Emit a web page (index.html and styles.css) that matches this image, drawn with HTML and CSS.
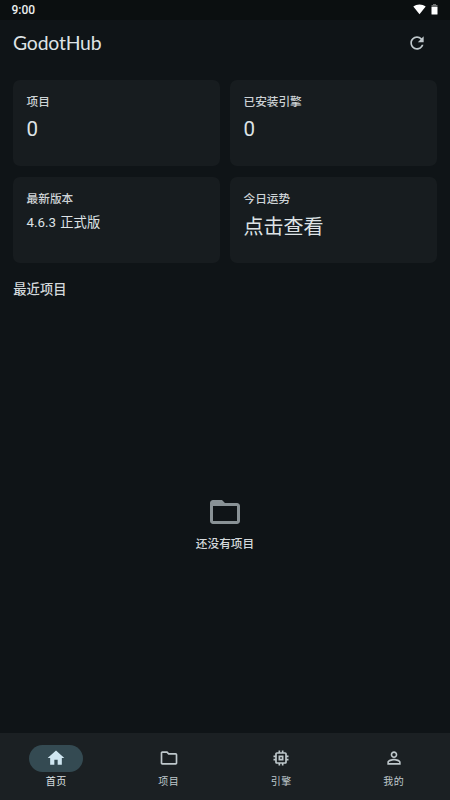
FILE: index.html
```html
<!DOCTYPE html>
<html lang="zh-CN">
<head>
<meta charset="utf-8">
<title>GodotHub</title>
<link rel="stylesheet" href="styles.css">
</head>
<body>
<div class="app">
  <div class="status">
    <span class="clock">9:00</span>
    <svg class="wifi" viewBox="0 0 13 11"><path d="M6.5 10.3 .3 2.6C3.6-.3 9.4-.3 12.7 2.6z"/></svg>
    <svg class="battery" viewBox="0 0 7 11"><path class="dim" d="M2 0h3v1h1.5v2H.5V1H2z"/><path d="M.5 3h6v7q0 .6-.6.6H1.1Q.5 10.6 .5 10z"/></svg>
  </div>
  <header class="bar">
    <h1>GodotHub</h1>
    <svg class="icon" viewBox="0 0 24 24"><path d="M17.65 6.35C16.2 4.9 14.21 4 12 4c-4.42 0-7.990 3.580-7.990 8s3.570 8 7.990 8c3.730 0 6.840-2.550 7.730-6h-2.080c-.82 2.330-3.040 4-5.650 4-3.310 0-6-2.690-6-6s2.690-6 6-6c1.660 0 3.140.69 4.220 1.780L13 11h7V4z"/></svg>
  </header>
  <main>
    <section class="cards">
      <div class="card"><div class="label">项目</div><div class="value number">0</div></div>
      <div class="card"><div class="label">已安装引擎</div><div class="value number">0</div></div>
      <div class="card"><div class="label">最新版本</div><div class="value small">4.6.3 正式版</div></div>
      <div class="card"><div class="label">今日运势</div><div class="value">点击查看</div></div>
    </section>
    <h2>最近项目</h2>
    <div class="empty">
      <svg viewBox="0 0 24 24"><path d="M20 6h-8l-2-2H4c-1.100 0-1.990.9-1.990 2L2 18c0 1.100.9 2 2 2h16c1.100 0 2-.9 2-2V8c0-1.100-.9-2-2-2zm0 12H4V8h16z"/></svg>
      <p>还没有项目</p>
    </div>
  </main>
  <nav>
    <div class="tab active"><span class="pill"><svg class="icon" viewBox="0 0 24 24"><path d="M10 20v-6h4v6h5v-8h3L12 3 2 12h3v8z"/></svg></span><span>首页</span></div>
    <div class="tab"><span class="pill"><svg class="icon" viewBox="0 0 24 24"><path d="m9.170 6 2 2H20v10H4V6zM10 4H4c-1.100 0-1.990.9-1.990 2L2 18c0 1.100.9 2 2 2h16c1.100 0 2-.9 2-2V8c0-1.100-.9-2-2-2h-8z"/></svg></span><span>项目</span></div>
    <div class="tab"><span class="pill"><svg class="icon" viewBox="0 0 24 24"><path d="M15 9H9v6h6zm-2 4h-2v-2h2zm8-2V9h-2V7c0-1.100-.9-2-2-2h-2V3h-2v2h-2V3H9v2H7c-1.100 0-2 .9-2 2v2H3v2h2v2H3v2h2v2c0 1.100.9 2 2 2h2v2h2v-2h2v2h2v-2h2c1.100 0 2-.9 2-2v-2h2v-2h-2v-2zm-4 6H7V7h10z"/></svg></span><span>引擎</span></div>
    <div class="tab"><span class="pill"><svg class="icon" viewBox="0 0 24 24"><path d="M12 5.900a2.100 2.100 0 1 1 0 4.200 2.100 2.100 0 0 1 0-4.200m0 9c2.970 0 6.100 1.460 6.100 2.100v1.100H5.900V17c0-.64 3.130-2.100 6.100-2.100M12 4C9.790 4 8 5.790 8 8s1.790 4 4 4 4-1.790 4-4-1.790-4-4-4m0 9c-2.670 0-8 1.340-8 4v3h16v-3c0-2.660-5.330-4-8-4"/></svg></span><span>我的</span></div>
  </nav>
</div>
</body>
</html>
```

FILE: styles.css
```css
* { box-sizing: border-box; margin: 0; }
body { background: #0f1417; color: #dee3e6; font-family: "Noto Sans CJK SC", sans-serif; }
svg { display: block; fill: currentColor; }
.app { display: flex; flex-direction: column; width: 450px; height: 800px; }
.status { display: flex; align-items: center; height: 20px; padding: 0 12px 0 11.5px; background: #0b0f10; color: #fff; }
.clock { flex: 1; font: 500 12px/20px Roboto, sans-serif; color: #eceeef; }
.wifi { width: 13px; height: 11px; margin: 0 5px 1px 0; }
.battery { width: 7px; height: 11px; margin-bottom: 2px; }
.dim { opacity: .4; }
.bar { display: flex; align-items: center; justify-content: space-between; height: 47px; padding: 0 23px 0 13px; }
h1 { margin-bottom: 2px; font-family: Lato, sans-serif; font-size: 19.4px; font-weight: 400; line-height: 24px; letter-spacing: -.2px; }
.icon { width: 20px; height: 20px; }
.bar .icon { margin-bottom: 1px; color: #bfc8cc; }
main { flex: 1; display: flex; flex-direction: column; padding: 13px 13.3px 0; }
.cards { display: grid; grid-template-columns: 1fr 1fr; grid-auto-rows: 86.4px; gap: 10.4px; }
.card { padding: 12.3px 13.3px; border-radius: 7px; background: #171c1f; }
.label { color: #ced3d6; font-size: 11.67px; font-weight: 500; line-height: 17px; }
.value { margin-top: 7px; font-size: 20px; line-height: 26px; }
.value.number { font-family: Roboto, sans-serif; font-size: 20.5px; }
.value.small { font-family: Roboto, "Noto Sans CJK SC", sans-serif; font-size: 13.3px; line-height: 20px; word-spacing: 1px; }
h2 { margin-top: 16px; color: #d4d9dc; font-size: 13.3px; font-weight: 500; line-height: 20px; }
.empty { flex: 1; display: flex; flex-direction: column; align-items: center; justify-content: center; padding-top: 11px; }
.empty svg { width: 36px; height: 40px; color: #899296; }
.empty p { margin-top: 2px; color: #d4d9dc; font-size: 11.67px; font-weight: 500; line-height: 17px; }
nav { display: flex; height: 67px; padding-top: 11.7px; background: #1b2023; color: #bfc8cc; }
.tab { flex: 1; display: flex; flex-direction: column; align-items: center; gap: 1.5px; font-size: 10px; font-weight: 400; line-height: 15px; letter-spacing: .4px; }
.pill { display: grid; place-items: center; width: 54px; height: 27px; border-radius: 14px; }
.active { color: #dee3e6; }
.active .pill { background: #344a52; color: #cfe6f1; }
```
